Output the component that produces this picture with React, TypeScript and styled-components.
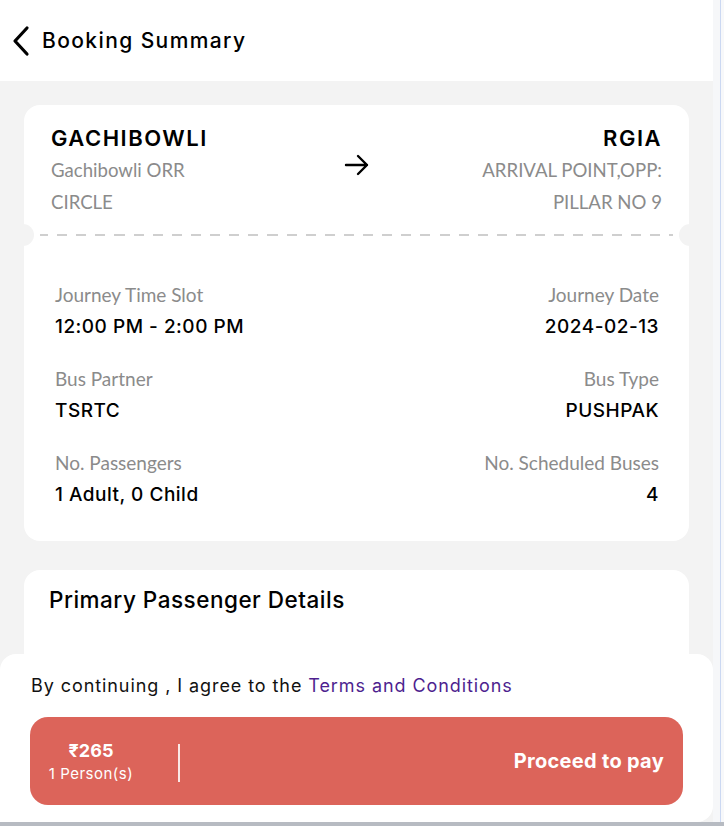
import React from "react";
import styled, { createGlobalStyle } from "styled-components";

const Global = createGlobalStyle`
  html, body { margin: 0; padding: 0; }
  body { background: #f7f8fa; font-family: Inter, "Noto Sans", sans-serif; }
  * { box-sizing: border-box; }
`;

const Frame = styled.div`
  display: flex;
  width: 724px;
  height: 826px;
  overflow: hidden;
  border-bottom: 4px solid #b7bbc2;
`;

const Screen = styled.div`
  position: relative;
  width: 713px;
  height: 822px;
  background: #f3f3f3;
  display: flex;
  flex-direction: column;
  overflow: hidden;
`;

const SideStrip = styled.div`
  flex: 1;
  background: #f6f7f9;
  border-right: 1px solid #cbd8f2;
  margin-right: 3px;
`;

const Header = styled.header`
  height: 81px;
  background: #fff;
  display: flex;
  align-items: center;
  gap: 10px;
  padding: 0 0 0 10px;
`;

const Title = styled.h1`
  margin: 0;
  font-size: 21px;
  font-weight: 500;
  color: #000;
  letter-spacing: 1.4px;
`;

const Content = styled.main`
  display: flex;
  flex-direction: column;
  gap: 29px;
  padding: 24px 24px 0 24px;
`;

const Card = styled.section`
  position: relative;
  background: #fff;
  border-radius: 16px;
`;

const RouteRow = styled.div`
  display: grid;
  grid-template-columns: 1fr 40px 1fr;
  align-items: start;
  padding: 19px 27px 0 27px;
  height: 129px;
`;

const Stop = styled.div<{ $align: "left" | "right" }>`
  display: flex;
  flex-direction: column;
  align-items: ${(p) => (p.$align === "right" ? "flex-end" : "flex-start")};
  text-align: ${(p) => p.$align};
`;

const StopName = styled.div`
  font-size: 22px;
  font-weight: 600;
  color: #000;
  line-height: 28px;
  letter-spacing: 1.5px;
`;

const StopDesc = styled.div`
  font-family: Lato, "Open Sans", sans-serif;
  font-size: 18.6px;
  color: #8b8b8b;
  line-height: 32px;
  margin-top: 2px;
  max-width: 186px;
`;

const ArrowBox = styled.div`
  display: flex;
  justify-content: center;
  padding-top: 29px;
`;

const Divider = styled.div`
  position: relative;
  height: 0;
  margin: 0 16px;
  border-top: 2px dashed #cfcfcf;
  border-image: repeating-linear-gradient(90deg, #cfcfcf 0 10px, transparent 10px 19px) 2;
`;

const Notch = styled.span<{ $side: "left" | "right" }>`
  position: absolute;
  top: -12px;
  ${(p) => (p.$side === "left" ? "left: -28px;" : "right: -28px;")}
  width: 22px;
  height: 22px;
  border-radius: 50%;
  background: #f3f3f3;
`;

const Details = styled.div`
  display: grid;
  grid-template-columns: 1fr 1fr;
  row-gap: 25px;
  padding: 47px 30px 31px 31px;
`;

const Field = styled.div<{ $align: "left" | "right" }>`
  display: flex;
  flex-direction: column;
  gap: 5px;
  text-align: ${(p) => p.$align};
`;

const Label = styled.div`
  font-family: Lato, "Open Sans", sans-serif;
  font-size: 19px;
  color: #8b8b8b;
  line-height: 24px;
`;

const Value = styled.div`
  font-size: 19px;
  font-weight: 500;
  color: #000;
  line-height: 30px;
  letter-spacing: 0.5px;
`;

const SectionTitle = styled.h2`
  margin: 0;
  padding: 16px 25px 80px;
  font-size: 22.5px;
  font-weight: 500;
  color: #000;
  letter-spacing: 0.5px;
`;

const BottomSheet = styled.footer`
  position: absolute;
  left: 0;
  right: 0;
  bottom: 0;
  height: 168px;
  background: #fff;
  border-radius: 16px 16px 16px 0;
  padding: 20px 30px 0 30px;
  display: flex;
  flex-direction: column;
  gap: 19px;
`;

const Agree = styled.p`
  margin: 0;
  padding-left: 1px;
  font-size: 18px;
  color: #111;
  line-height: 24px;
  letter-spacing: 0.92px;
`;

const Link = styled.a`
  color: #4e1f8f;
  text-decoration: none;
`;

const PayButton = styled.button`
  display: flex;
  align-items: center;
  width: 653px;
  height: 88px;
  border: none;
  border-radius: 18px;
  background: #dc645a;
  color: #fff;
  font-family: Inter, "Noto Sans", sans-serif;
  padding: 0 19px 0 0;
  cursor: pointer;
`;

const Price = styled.div`
  width: 122px;
  display: flex;
  flex-direction: column;
  align-items: center;
  gap: 2px;
  padding-top: 2px;
`;

const Amount = styled.span`
  font-size: 18px;
  font-weight: 700;
  line-height: 22px;
`;

const Persons = styled.span`
  font-size: 15px;
  font-weight: 400;
  line-height: 20px;
  letter-spacing: 0.5px;
`;

const VBar = styled.span`
  width: 1.5px;
  height: 38px;
  margin-left: 26px;
  margin-top: 4px;
  background: rgba(255, 255, 255, 0.85);
`;

const PayText = styled.span`
  margin-left: auto;
  font-size: 20px;
  font-weight: 700;
  letter-spacing: 0.3px;
`;

const fields: { label: string; value: string; align: "left" | "right" }[] = [
  { label: "Journey Time Slot", value: "12:00 PM - 2:00 PM", align: "left" },
  { label: "Journey Date", value: "2024-02-13", align: "right" },
  { label: "Bus Partner", value: "TSRTC", align: "left" },
  { label: "Bus Type", value: "PUSHPAK", align: "right" },
  { label: "No. Passengers", value: "1 Adult, 0 Child", align: "left" },
  { label: "No. Scheduled Buses", value: "4", align: "right" },
];

export default function App() {
  return (
    <>
      <Global />
      <Frame>
        <Screen>
          <Header>
            <svg width="22" height="32" viewBox="0 0 22 32" fill="none">
              <path d="M17 3 L5 16 L17 29" stroke="#000" strokeWidth="3.2" strokeLinecap="round" strokeLinejoin="round" />
            </svg>
            <Title>Booking Summary</Title>
          </Header>
          <Content>
            <Card>
              <RouteRow>
                <Stop $align="left">
                  <StopName>GACHIBOWLI</StopName>
                  <StopDesc>Gachibowli ORR CIRCLE</StopDesc>
                </Stop>
                <ArrowBox>
                  <svg width="26" height="24" viewBox="0 0 26 24" fill="none">
                    <path d="M2 12 H23 M14 3 L23 12 L14 21" stroke="#000" strokeWidth="2.4" strokeLinecap="round" strokeLinejoin="round" />
                  </svg>
                </ArrowBox>
                <Stop $align="right">
                  <StopName>RGIA</StopName>
                  <StopDesc>ARRIVAL POINT,OPP: PILLAR NO 9</StopDesc>
                </Stop>
              </RouteRow>
              <Divider>
                <Notch $side="left" />
                <Notch $side="right" />
              </Divider>
              <Details>
                {fields.map((f) => (
                  <Field key={f.label} $align={f.align}>
                    <Label>{f.label}</Label>
                    <Value>{f.value}</Value>
                  </Field>
                ))}
              </Details>
            </Card>
            <Card>
              <SectionTitle>Primary Passenger Details</SectionTitle>
            </Card>
          </Content>
          <BottomSheet>
            <Agree>
              By continuing , I agree to the <Link>Terms and Conditions</Link>
            </Agree>
            <PayButton>
              <Price>
                <Amount>₹265</Amount>
                <Persons>1 Person(s)</Persons>
              </Price>
              <VBar />
              <PayText>Proceed to pay</PayText>
            </PayButton>
          </BottomSheet>
        </Screen>
        <SideStrip />
      </Frame>
    </>
  );
}
